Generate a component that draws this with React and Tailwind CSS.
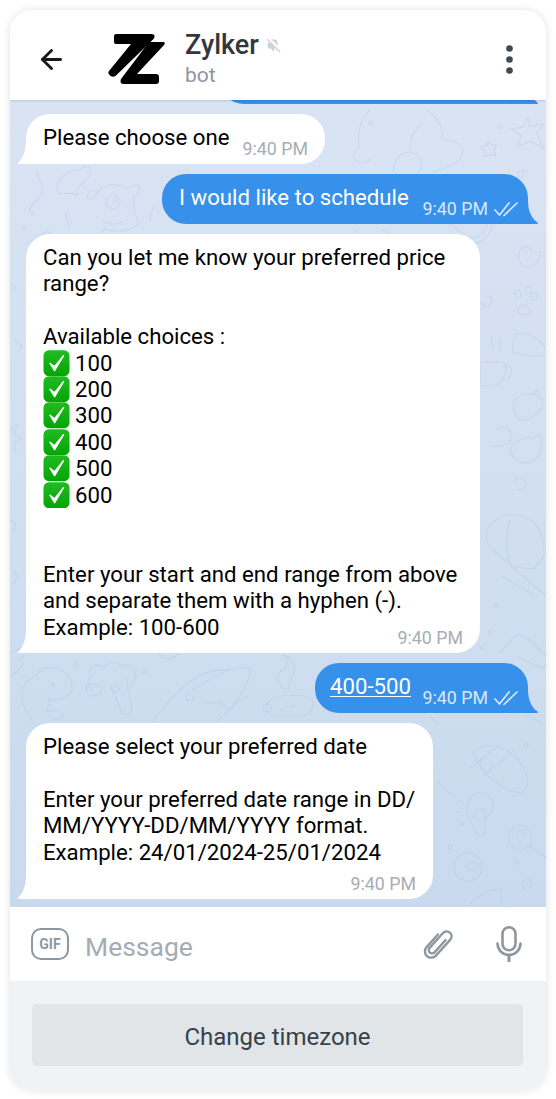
import { ArrowLeft } from 'lucide-react'

function Check() {
  return (
    <svg width="27" height="26.4" viewBox="0 0 27 26" className="shrink-0">
      <defs>
        <linearGradient id="checkGreen" x1="0" y1="0" x2="0" y2="1">
          <stop offset="0" stopColor="#22bb22" />
          <stop offset="1" stopColor="#03a503" />
        </linearGradient>
      </defs>
      <rect x="0.5" y="0" width="26" height="26" rx="5.5" fill="url(#checkGreen)" />
      <path d="M7 13l4.6 7.5L20.5 5.5 11.6 16.6z" fill="#fff" stroke="#fff" strokeWidth="1.4" strokeLinejoin="round" />
    </svg>
  )
}

function DoubleTick() {
  return (
    <svg width="24" height="16" viewBox="0 0 24 16" className="shrink-0" fill="none" stroke="#d9e9fa" strokeWidth="1.7" strokeLinecap="round" strokeLinejoin="round">
      <path d="M1 9l4.5 5L15 2" />
      <path d="M10 14.5L23 2" />
    </svg>
  )
}

function TailLeft() {
  return (
    <svg width="32" height="24" viewBox="0 0 32 24" className="absolute bottom-0 -left-2">
      <path d="M8 0C8 9 6 17 .4 22.6-.2 23.3 0 24 1 24H32V0z" fill="#fff" />
    </svg>
  )
}

function TailRight() {
  return (
    <svg width="32" height="24" viewBox="0 0 32 24" className="absolute bottom-0 -right-2.5">
      <path d="M22 0c0 9 2 17 9.600 22.600.6.700.4 1.400-.6 1.400H0V0z" fill="#3790ea" />
    </svg>
  )
}

function Incoming({ children, className = '' }) {
  return (
    <div className={`relative bg-white text-black rounded-[24px] ml-4 ${className}`}>
      <TailLeft />
      <div className="relative">{children}</div>
    </div>
  )
}

function Outgoing({ children, className = '' }) {
  return (
    <div className={`relative bg-[#3790ea] text-white rounded-[24px] self-end mr-[18px] ${className}`}>
      <TailRight />
      <div className="relative">{children}</div>
    </div>
  )
}

function Doodles() {
  return (
    <svg className="absolute inset-0" width="536" height="807" viewBox="0 0 536 807" fill="none" stroke="#a9c4e4" strokeWidth="1.1" strokeLinecap="round" strokeLinejoin="round" opacity="0.32">
      {/* top right: blob creature, star, starfish */}
      <path d="M360 10c-10 10-14 26-10 37-10 4-8 16 3 16 4 0 6-2 8-5M417 10c12 8 16 20 16 30 10 0 20 4 20 10 0 10-10 17-30 22" />
      <path d="M413 23c-8 6-14 14-13 29" />
      <path d="M398 52c8 0 14 5 14 12s-8 14-16 14-14-6-12-12 6-14 14-14z" />
      <path d="M478 41l3 4 6 0-3 5 2 6-6-2-5 3 0-6-5-4 6-1z" />
      <path d="M518 17l2 9 14-2-8 9 8 16-14-8-12 6 3-12-10-6 12-2z" />
      <circle cx="490" cy="26" r="2" />
      <circle cx="361" cy="23" r="2" />
      <path d="M512 72c4 4-2 8-4 4-2-5 6-8 9-3" />
      {/* left: string, leaf, dog */}
      <path d="M28 70c-4 4 6 12 4 22-3 8-14 14-12 20 2 4 4 2 4 0" />
      <path d="M67 70c-10 0-20 10-20 20 0 6 12 2 18 4l2 2 0-8c6-4 16-14 13-20-4-4-10 2-13 2z" />
      <path d="M83 90c-4 2-8 6-6 8s6 0 8-2c6-12 20-14 30-8 6 2 12-6 14-2 2 6-2 10-6 12 2 6 0 12 2 16 4 6 4 12-2 14-10 4-24 4-28 0-2 6-10 6-18 24" />
      <circle cx="103" cy="102" r="7" />
      <circle cx="106" cy="101" r="1.5" />
      <path d="M57 112c-2 2 0 6 0 8s2 4 2 8M92 120c4 4 14 6 20 2" />
      <circle cx="14" cy="128" r="2" />
      <path d="M15 145l22-14 12 10" />
      {/* right column */}
      <path d="M510 150c4-6 12-4 12 3 4 0 6-2 8 0 0 8-6 14-12 14-8 0-12-8-8-17z" />
      <path d="M460 138c10 0 16-6 18-16 4-2 6 0 4 4-2 10-10 18-22 18" />
      <path d="M508 198a3 4 0 1 1 .1 0zM518 194a3 4 0 1 1 .1 0zM524 200a3 4 0 1 1 .1 0zM508 208c2-4 10-4 12 2 2 6-4 6-6 4-2 2-8 0-6-6z" />
      <path d="M477 196c4 0 6 4 4 8s-8 4-10-2" />
      <path d="M505 235c10-6 26 4 32 16M502 252c2-6 0-12 3-17M502 252c14 4 26 6 36 2" />
      <path d="M470 262h20c6 0 8 4 4 14-4 8-8 10-14 10h-10zM493 266c6-2 10 2 8 8s-6 6-10 6" />
      <path d="M482 236c-4 6 4 8 0 14M490 238c-4 6 4 8 0 14" />
      <path d="M505 300c6-8 20-8 28 0 0 10-10 20-22 20-6-2-10-12-6-20zM522 294l6-4 0 6" />
      <path d="M486 330c8-6 16 0 16 8-2 6-10 8-20 8M500 350c4-8 14-14 22-12 4 0 8-6 10-2-2 8 0 12-2 18-8 12-26 12-30-4z" />
      <path d="M504 382a6 6 0 1 1 4 8" />
      <path d="M480 425c8-10 26-14 40-6 10 8 14 22 14 36 0 4-6 6-10 14l-20-2c-10-8-26-18-28-28 0-6 0-10 4-14zM500 420c-6 20-4 38 2 48M504 468l32 28M492 476l30 18" />
      <path d="M490 553l14-16c4-4 10-2 14 2l18 16c4 4 2 8 0 10-4 4-6 4-10 0l-18-8" />
      <circle cx="486" cy="505" r="2" />
      <path d="M478 530l2 6M468 545l4 4" />
      {/* bottom right */}
      <path d="M463 653c14-14 40-6 50 14 6 10 6 22-2 26-16-2-38-16-48-40zM460 668l28-22M474 676l30-26" />
      <circle cx="476" cy="665" r="6" />
      <path d="M457 708c0-10 8-16 14-16 8 0 12 6 12 14 0 6-6 10-8 16-2 4 2 8 0 12-4 2-10 0-10-2-2-8-8-14-8-24zM463 718c4-4 4-8 6-10 2 2 2 2 4 0 2 4 2 8 2 12" />
      <path d="M448 700l4 2M446 712h5M450 726l4-3" />
      <circle cx="510" cy="738" r="12" />
      <path d="M510 738a4 4 0 1 1 4-2M520 746l16 12" />
      <circle cx="458" cy="767" r="14" />
      <circle cx="462" cy="766" r="4" />
      <circle cx="507" cy="762" r="2" />
      <circle cx="440" cy="747" r="2" />
      <path d="M518 787c4 0 6-6 0-8-6 0-8 8-2 10" />
      <path d="M457 808c6-10 20-18 36-20-4 4-2 10 0 20" />
      <path d="M428 680c4 8 6 12 14 14M430 600l16 10-4-14" />
      <circle cx="516" cy="645" r="2" />
      <path d="M420 616l8 8M515 615l18 8" />
      {/* between bubbles, lower left */}
      <path d="M12 600c-2-16 8-22 14-24 4-10 14-8 18-8 14 2 18 12 18 22-2 6-10 10-20 10l-4 0c0 4 2 8-2 12l10-2 8 4c-2 6-6 6-12 6M12 600c2 8 6 14 10 20M38 598c4 2 10 2 14 0" />
      <circle cx="43" cy="585" r="1.5" />
      <path d="M14 562c-2 4-6 12-14 14" />
      <path d="M83 590c-4 0-8-8-2-14-4-10 10-14 12-8 6-8 16-6 18-2 12-4 16 6 14 12-4 10-10 14-14 16M100 585l12 28c4 2 8 2 10-2l-6-34" />
      <path d="M76 588c-2-4 6-6 10-2 2-2 6 0 6 4s-6 6-10 6-6-4-6-8z" />
      <circle cx="106" cy="589" r="3" />
      <circle cx="66" cy="564" r="2" />
      <circle cx="134" cy="571" r="2" />
      <path d="M148 552c4 6 8 8 14 6 4-2 8-4 10-6" />
      <path d="M143 622c20-30 46-54 72-52 12-2 22-4 26-2-2 16-14 36-34 54M176 594c14-8 30-20 44-24M192 600c10 4 14 4 18 2l10 8 8-8 10-6" />
      <ellipse cx="180" cy="598" rx="4" ry="3" />
      <path d="M277 590c-10-4-12-16-4-20 6-4 4-10 0-16 10 6 14 14 10 22-4 6-4 8-4 14" />
      <path d="M260 600c8-6 34-6 40-2 6 4 2 18-8 18h-28c-8-2-12-8-4-16z" />
      <circle cx="257" cy="608" r="4" />
      <circle cx="283" cy="606" r="1.5" />
      <path d="M270 610h4" />
      <path d="M0 190c6 0 6-4 0-6M0 330l8-6-4 10 8 4-8 4 2 10M4 240l8 6-4 6M0 420l6 4-2 8M2 470c6 4 6 10 0 14" />
      <path d="M8 560c6-2 8-6 6-10-2-2-8-2-14 4" />
      <path d="M145 105c-4 6-6 12-4 16" />
      <path d="M345 130c4 4 6 10 4 16M372 130c10 2 14 10 10 14M440 125c10 4 16 12 14 18" />
    </svg>
  )
}

function TimeLight({ className = '' }) {
  return <span className={`absolute text-[17.8px] leading-[22px] text-[#a6adb5] ${className}`}>9:40 PM</span>
}

function TimeSent() {
  return (
    <span className="absolute right-[10px] top-[24px] flex items-center gap-1.5 text-[17.8px] leading-[22px] text-[#d9e9fa]">
      9:40 PM <DoubleTick />
    </span>
  )
}

export default function App() {
  return (
    <div className="w-[556px] h-[1099px] bg-white p-2.5 font-['Roboto',sans-serif]">
      <div className="w-[536px] h-[1080px] rounded-[22px] overflow-hidden flex flex-col shadow-[0_0_8px_rgba(0,0,0,0.12)]">
        <header className="h-[90px] shrink-0 bg-white flex items-center pl-[26px] pr-[33px] pt-2 relative z-10 shadow-[0_1px_2px_rgba(0,0,0,0.12)]">
          <ArrowLeft size={31} strokeWidth={2.2} className="text-[#17191c]" />
          <svg width="58" height="51" viewBox="0 0 58 51" className="ml-[41px] shrink-0">
            <path d="M6 2Q6 0 8 0H43Q47 0 46.500 3L45.500 5 7.500 42Q4 44 1.500 41 -.5 38.500 1 37L23 10H8Q6 10 6 8Z" fill="#000" />
            <path d="M41 8H55Q58 8 56 11L29 40H48Q51 40 51 43V47Q51 50 48 50H16Q11 50 13 45Z" fill="#000" />
          </svg>
          <div className="ml-[19px] mb-[2px] flex flex-col">
            <div className="flex items-center gap-[7px]">
              <span className="text-[27px] leading-[34px] font-medium text-[#33373b]">Zylker</span>
              <svg width="15" height="15" viewBox="0 0 15 15">
                <path d="M5 1l6 1 1 6zM1.500 5h3l4 4-.5 5-3-3.500H2z" fill="#cfd3d6" />
                <path d="M1 1l13 13" stroke="#cfd3d6" strokeWidth="1.5" />
              </svg>
            </div>
            <span className="text-[21px] leading-[26px] text-[#8d969f]">bot</span>
          </div>
          <svg width="7" height="29" viewBox="0 0 7 29" className="ml-auto">
            <circle cx="3.500" cy="3.500" r="3.300" fill="#424a51" />
            <circle cx="3.500" cy="14.500" r="3.300" fill="#424a51" />
            <circle cx="3.500" cy="25.500" r="3.300" fill="#424a51" />
          </svg>
        </header>

        <main className="relative h-[807px] shrink-0 overflow-hidden bg-gradient-to-b from-[#d9e4f3] to-[#c9daee] flex flex-col justify-end pb-2 gap-2.5 text-[22.2px] leading-[26.4px]">
          <Doodles />
          <Outgoing className="w-[308px] h-[50px] shrink-0"></Outgoing>

          <Incoming className="w-[299px] h-[50px] shrink-0 self-start">
            <div className="pl-[17px] pt-[10px]">Please choose one</div>
            <TimeLight className="right-[17px] top-[24px]" />
          </Incoming>

          <Outgoing className="w-[366px] h-[50px] shrink-0">
            <div className="pl-[17px] pt-[10px]">I would like to schedule</div>
            <TimeSent />
          </Outgoing>

          <Incoming className="w-[454px] h-[419px] shrink-0 self-start">
            <div className="px-[17px] pt-[10px]">
              <p>Can you let me know your preferred price range?</p>
              <p className="mt-[26.4px]">Available choices :</p>
              {[100, 200, 300, 400, 500, 600].map((n) => (
                <div key={n} className="flex items-center gap-[5px] h-[26.4px]">
                  <Check />
                  {n}
                </div>
              ))}
              <p className="mt-[52.8px]">Enter your start and end range from above and separate them with a hyphen (-).</p>
              <p>Example: 100-600</p>
            </div>
            <TimeLight className="right-[17px] top-[393px]" />
          </Incoming>

          <Outgoing className="w-[213px] h-[50px] shrink-0">
            <div className="pl-[15px] pt-[10px] underline decoration-1 underline-offset-2">400-500</div>
            <TimeSent />
          </Outgoing>

          <Incoming className="w-[407px] h-[176px] shrink-0 self-start">
            <div className="pl-[17px] pr-[12px] pt-[10px]">
              <p>Please select your preferred date</p>
              <p className="mt-[26.4px]">Enter your preferred date range in DD/</p>
              <p>MM/YYYY-DD/MM/YYYY format.</p>
              <p>Example: 24/01/2024-25/01/2024</p>
            </div>
            <TimeLight className="right-[17px] top-[150px]" />
          </Incoming>
        </main>

        <div className="h-[74px] shrink-0 bg-white flex items-center pl-[21px] pr-[23px]">
          <div className="w-[38px] h-[32px] shrink-0 rounded-[10px] border-[2.5px] border-[#8f979e] flex items-center justify-center text-[14px] font-bold text-[#8f979e]">GIF</div>
          <span className="ml-4 pt-[5px] text-[26.5px] text-[#a3acb4]">Message</span>
          <svg width="34" height="36" viewBox="0 0 34 36" className="ml-auto mr-[41px]" fill="none" stroke="#8f979e" strokeWidth="2.4" strokeLinecap="round">
            <g transform="rotate(42 17 18)">
              <path d="M17.500 10V26.500a3.300 3.300 0 0 1-6.600 0V6.500a4.800 4.800 0 0 1 9.800 0V28a6.300 6.300 0 0 1-12.600 0V11" transform="translate(2.500 0)" />
            </g>
          </svg>
          <svg width="26" height="36" viewBox="0 0 26 36" className="mr-[1px]" fill="none" stroke="#8f979e" strokeWidth="2.6" strokeLinecap="round">
            <rect x="6.500" y="1.300" width="13" height="23" rx="6.500" />
            <path d="M1.500 17.500a11.500 11.500 0 0 0 23 0" />
            <path d="M13 29v6" strokeWidth="3" />
          </svg>
        </div>

        <div className="flex-1 bg-[#f0f2f5] pt-[23px] px-[22px]">
          <button className="w-[491px] h-[62px] pt-[3px] rounded-[5px] bg-[#e2e5e8] text-[24px] text-[#36414a]">Change timezone</button>
        </div>
      </div>
    </div>
  )
}
